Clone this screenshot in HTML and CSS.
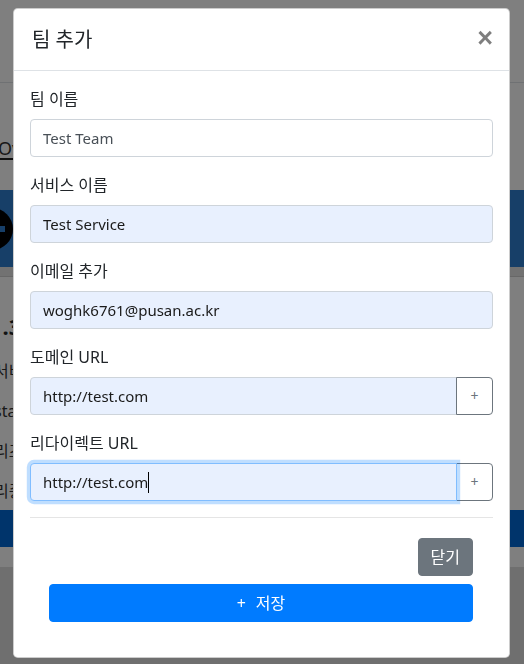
FILE: index.html
```html
<!DOCTYPE html>
<html lang="ko">
<head>
<meta charset="utf-8">
<title>팀 추가</title>
<link rel="stylesheet" href="styles.css">
</head>
<body>
<div class="page">
  <header class="page-nav"></header>
  <nav class="tabs"><span class="tab">Overview</span></nav>
  <section class="hero">
    <svg class="hero-icon" width="44" height="44" viewBox="0 0 44 44" aria-hidden="true">
      <circle cx="22" cy="22" r="21" fill="#000"/>
      <rect x="9" y="19" width="26" height="6" fill="#2f7fd0"/>
      <rect x="19" y="9" width="6" height="26" fill="#2f7fd0"/>
    </svg>
  </section>
  <div class="hero-sub"></div>
  <div class="info">
    <div class="info-title">1.3</div>
    <div class="info-row">서비스</div>
    <div class="info-row">stat</div>
    <div class="info-row">리즈</div>
    <div class="info-row">리종</div>
  </div>
  <div class="bar"></div>
  <div class="spacer"></div>
  <footer class="page-foot"></footer>
</div>

<div class="backdrop"></div>

<div class="modal">
  <div class="modal-dialog">
    <div class="modal-content">
      <div class="modal-header">
        <h5 class="modal-title">팀 추가</h5>
        <button class="close" type="button" aria-label="Close">×</button>
      </div>
      <div class="modal-body">
        <div class="form-group">
          <label class="form-label">팀 이름</label>
          <input class="form-control" type="text" value="Test Team">
        </div>
        <div class="form-group">
          <label class="form-label">서비스 이름</label>
          <input class="form-control autofill" type="text" value="Test Service">
        </div>
        <div class="form-group">
          <label class="form-label">이메일 추가</label>
          <input class="form-control autofill" type="text" value="woghk6761@pusan.ac.kr">
        </div>
        <div class="form-group">
          <label class="form-label">도메인 URL</label>
          <div class="input-group">
            <input class="form-control autofill grouped" type="text" value="http://test.com">
            <button class="btn-add" type="button">+</button>
          </div>
        </div>
        <div class="form-group">
          <label class="form-label">리다이렉트 URL</label>
          <div class="input-group">
            <input class="form-control autofill grouped focused" type="text" value="http://test.com">
            <button class="btn-add" type="button">+</button>
            <span class="caret" aria-hidden="true"></span>
          </div>
        </div>
        <hr class="divider">
      </div>
      <div class="modal-footer">
        <button class="btn btn-secondary" type="button">닫기</button>
        <button class="btn btn-primary btn-block" type="button"><span class="plus">+</span>저장</button>
      </div>
    </div>
  </div>
</div>
</body>
</html>
```

FILE: styles.css
```css
* { box-sizing: border-box; }

html, body {
  margin: 0;
  height: 100%;
  overflow: hidden;
}

body {
  font-family: "Noto Sans", "Noto Sans CJK KR", sans-serif;
  font-size: 16px;
  line-height: 1.5;
  color: #212529;
  background: #fff;
}

/* ---------- background page ---------- */
.page {
  display: flex;
  flex-direction: column;
  height: 664px;
  overflow: hidden;
}

.page-nav {
  height: 83px;
  border-bottom: 1px solid #dee2e6;
  flex: none;
}

.tabs {
  height: 107px;
  flex: none;
  padding-top: 54px;
}

.tab {
  display: inline-block;
  margin-left: -2px;
  font-size: 18px;
  line-height: 20px;
  border-bottom: 2px solid #222;
  color: #333;
}

.hero {
  height: 77px;
  flex: none;
  background: #2f7fd0;
  display: flex;
  align-items: center;
}

.hero-icon {
  margin-left: -30px;
}

.hero-sub {
  height: 10px;
  flex: none;
  background: #e4e4e4;
  border-bottom: 1px solid #cfcfcf;
}

.info {
  height: 233px;
  flex: none;
  padding-top: 34px;
}

.info-title {
  margin-left: -10px;
  font-size: 22px;
  font-weight: 700;
  line-height: 30px;
  margin-bottom: 10px;
}

.info-row {
  margin-left: -6px;
  font-size: 16px;
  line-height: 40px;
  color: #333;
}

.bar {
  height: 37px;
  flex: none;
  background: #0068d6;
}

.spacer {
  height: 20px;
  flex: none;
}

.page-foot {
  flex: 1;
  background: #dedede;
}

/* ---------- overlay ---------- */
.backdrop {
  position: fixed;
  inset: 0;
  background: rgba(0, 0, 0, 0.5);
}

.modal {
  position: fixed;
  inset: 0;
}

.modal-dialog {
  margin: 8px 14px 0 13px;
}

.modal-content {
  background: #fff;
  border: 1px solid rgba(0, 0, 0, 0.2);
  border-radius: 4.8px;
  display: flex;
  flex-direction: column;
}

.modal-header {
  display: flex;
  align-items: flex-start;
  justify-content: space-between;
  padding: 16px 16px 15px 16px;
  border-bottom: 1px solid #dee2e6;
}

.modal-title {
  margin: 0;
  font-size: 20px;
  line-height: 30px;
  font-weight: 400;
  padding-left: 2px;
}

.close {
  padding: 16px;
  margin: -16px -16px -16px auto;
  background: transparent;
  border: 0;
  font-family: "Liberation Sans", Arial, sans-serif;
  font-size: 27px;
  font-weight: 700;
  line-height: 1;
  color: #000;
  opacity: 0.5;
  text-shadow: 0 1px 0 #fff;
}

.modal-body {
  padding: 16px 16px 0 16px;
}

.form-group {
  margin-bottom: 16px;
}

.form-label {
  display: block;
  margin-bottom: 8px;
  line-height: 24px;
}

.form-control {
  display: block;
  width: 100%;
  height: 38px;
  padding: 6px 12px;
  font-family: inherit;
  font-size: 15px;
  line-height: 24px;
  color: #495057;
  background: #fff;
  border: 1px solid #ced4da;
  border-radius: 4px;
  outline: none;
}

.form-control.autofill {
  background: #e8f0fe;
  color: #1a1a1a;
}

.input-group {
  position: relative;
  display: flex;
  align-items: stretch;
}

.form-control.grouped {
  flex: 1;
  width: auto;
  min-width: 0;
  border-top-right-radius: 0;
  border-bottom-right-radius: 0;
}

.form-control.focused {
  position: relative;
  z-index: 3;
  border-color: #80bdff;
  box-shadow: 0 0 0 3.2px rgba(0, 123, 255, 0.25);
}

.caret {
  position: absolute;
  z-index: 4;
  left: 118px;
  top: 9px;
  width: 1px;
  height: 21px;
  background: #000;
}

.btn-add {
  width: 37px;
  margin-left: -1px;
  padding: 0;
  background: #fff;
  border: 1px solid #6c757d;
  border-radius: 0 4px 4px 0;
  color: #6c757d;
  font-family: inherit;
  font-size: 14px;
  line-height: 24px;
}

.divider {
  margin: 16px 0;
  border: 0;
  border-top: 1px solid rgba(0, 0, 0, 0.1);
  height: 0;
}

.modal-footer {
  display: flex;
  flex-direction: column;
  align-items: flex-end;
  gap: 8px;
  padding: 4px 36px 35px 35px;
}

.btn {
  display: inline-block;
  height: 38px;
  padding: 6px 12px;
  font-family: inherit;
  font-size: 16px;
  line-height: 24px;
  border: 1px solid transparent;
  border-radius: 4px;
  color: #fff;
  text-align: center;
}

.btn-secondary {
  background: #6c757d;
  border-color: #6c757d;
}

.btn-primary {
  background: #007bff;
  border-color: #007bff;
}

.btn-block {
  align-self: stretch;
}

.plus {
  margin-right: 10px;
}
```
